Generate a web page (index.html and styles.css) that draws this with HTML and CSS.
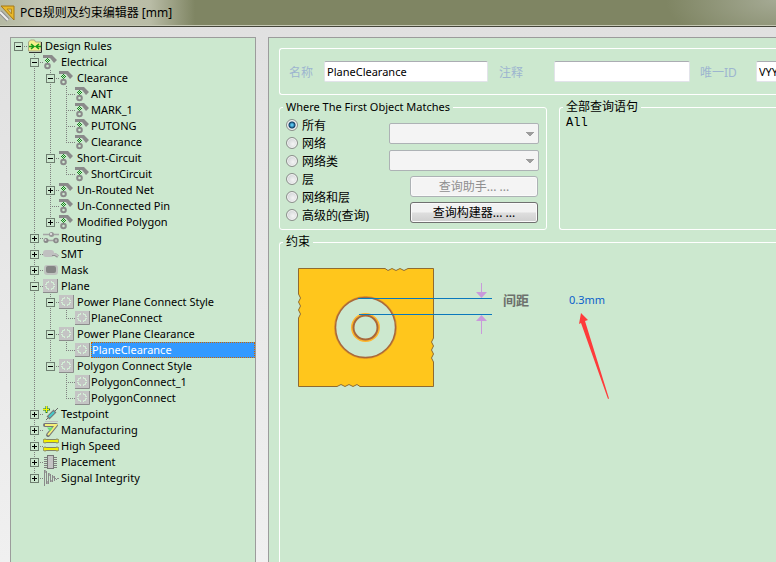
FILE: index.html
```html
<!DOCTYPE html>
<html lang="zh-CN">

<head>
  <meta charset="UTF-8">
  <meta name="viewport" content="width=device-width, initial-scale=1.0">
  <title>PCB规则及约束编辑器 [mm]</title>
  <link rel="stylesheet" href="styles.css">
</head>

<body>
  <!-- Tree icons -->
  <svg class="sprite" aria-hidden="true">
    <symbol id="i-root" viewBox="0 0 16 16">
      <path d="M1.500 13V4l2-2h4l1 2h5.500v9z" fill="#f4f08a" stroke="#a9a983" />
      <path d="M2 14.500h12.500V4" fill="none" stroke="#333" />
      <path d="M2 8.500h5M14 8.500H9M4 6l3 2.500L4 11M12 6L9 8.500l3 2.500" fill="none" stroke="#159a15" stroke-width="1.500" />
    </symbol>
    <symbol id="i-electrical" viewBox="0 0 16 16">
      <path d="M0 4V1h9l5 5-3 3L7 4z" fill="#8a8a8a" />
      <path d="M4 4h1v1H4zM3 5h1v1H3zM5 5h1v1H5zM2 6h1v1H2zM4 6h1v1H4zM6 6h1v1H6zM3 7h1v1H3zM5 7h1v1H5zM4 8h1v1H4z" fill="#15891a" />
      <circle cx="4.500" cy="12" r="2.300" fill="#cce8cf" stroke="#8a8a8a" stroke-width="2" />
    </symbol>
    <symbol id="i-routing" viewBox="0 0 16 16">
      <path d="M0 4.500h16M2 10.500h12" stroke="#a5a5a5" stroke-width="1.500" />
      <circle cx="8.500" cy="4.500" r="2.500" fill="#999" />
      <circle cx="3" cy="10.500" r="2.500" fill="#888" />
      <circle cx="13" cy="10.500" r="2" fill="#bbb" stroke="#888" stroke-width="1.500" />
      <circle cx="8" cy="4" r="1" fill="#eee" />
      <circle cx="2.500" cy="10" r="1" fill="#ddd" />
    </symbol>
    <symbol id="i-smt" viewBox="0 0 16 16">
      <rect y="4" width="11" height="7" rx="3" fill="#c0c0c0" />
      <path d="M9 8.500h3l3 2" fill="none" stroke="#909090" stroke-width="3" />
      <path d="M9 8h3l3 2" fill="none" stroke="#c0c0c0" stroke-width="2" />
    </symbol>
    <symbol id="i-mask" viewBox="0 0 16 16">
      <rect x="1" y="3" width="14" height="10" rx="3" fill="#bfc3bf" />
      <rect x="3" y="4" width="10" height="7" rx="2" fill="#858585" />
    </symbol>
    <symbol id="i-plane" viewBox="0 0 16 16">
      <path d="M0 1h14v13H0z" fill="#c4c4c4" />
      <path d="M0 14.500h14.500V1" fill="none" stroke="#8c8c8c" />
      <path d="M5.500 3v1.500H3.500v2H2M8.500 3v1.500h2v2H12M5.500 12v-1.500H3.500v-2H2M8.500 12v-1.500h2v-2H12" fill="none" stroke="#d5f2d8" />
    </symbol>
    <symbol id="i-testpoint" viewBox="0 0 16 16">
      <path d="M2 15.500h13" stroke="#c0c0c0" />
      <path d="M3 14l3-3M12 5l3-3" stroke="#666" />
      <path d="M5 12l7-7" stroke="#777" stroke-width="4" />
      <path d="M6 11l5-5" stroke="#4cc" stroke-width="2" />
      <path d="M3.500 0v7M0 3.500h7" stroke="#267d16" stroke-width="2" />
      <path d="M3.500 0v6M0 3.500h6" stroke="#f5f500" />
    </symbol>
    <symbol id="i-manufacturing" viewBox="0 0 16 16">
      <path d="M2 3h11L5 13" fill="none" stroke="#777" stroke-width="4" stroke-linejoin="round" stroke-linecap="round" />
      <path d="M2 3h11L5 13" fill="none" stroke="#f4f07a" stroke-width="2" />
      <path d="M4 5.500h6l-3 4z" fill="#69df77" />
    </symbol>
    <symbol id="i-speed" viewBox="0 0 16 16">
      <path d="M2 3h12M2 11h12" stroke="#84846a" stroke-width="4" />
      <g fill="#f2f000" stroke="#84846a">
        <circle cx="2" cy="3" r="2" />
        <circle cx="14" cy="3" r="2" />
        <circle cx="2" cy="11" r="2" />
        <circle cx="14" cy="11" r="2" />
      </g>
      <path d="M2 3h12M2 11h12" stroke="#f2f000" stroke-width="2" />
    </symbol>
    <symbol id="i-placement" viewBox="0 0 16 16">
      <path d="M1 3.500h13M1 5.500h13M1 7.500h13M1 9.500h13M1 11.500h13M1 13.500h13" stroke="#808080" />
      <rect x="4.500" y="1.500" width="6" height="13" fill="#c4c4c4" stroke="#777" />
    </symbol>
    <symbol id="i-signal" viewBox="0 0 16 16">
      <path d="M1.500 0v16M3.500 1v13M5.500 3v11M7.500 4v8M9.500 5v7M11.500 6v5M12 8.500h1M13 9.500h1M14 8.500h2" stroke="#8a8a8a" />
      <path d="M2.500 0v3M4.500 11v3M6.500 3v3M8.500 10v2M10.500 6v2" stroke="#a5aaa5" />
    </symbol>
  </svg>

  <header class="titlebar">
    <svg class="app-icon" viewBox="0 0 16 16" aria-hidden="true">
      <path d="M1 1h13v14z" fill="#e9b92b" stroke="#a57916" />
      <path d="M7 4h4.500v5z" fill="#c9c49c" stroke="#b78a1d" />
      <path d="M0 7l8 8" stroke="#8d8d8d" stroke-width="4" />
      <path d="M0 7l8 8" stroke="#eee" stroke-width="2" />
    </svg>
    <h1 class="title">PCB规则及约束编辑器 [mm]</h1>
  </header>

  <main class="window">
    <nav class="tree-panel" aria-label="Design Rules">
      <ul class="tree">
        <li>
          <div class="row"><button class="toggle" aria-label="Collapse"></button><svg class="icon"><use href="#i-root" /></svg><a class="label" href="#">Design Rules</a></div>
          <ul>
            <li>
              <div class="row"><button class="toggle" aria-label="Collapse"></button><svg class="icon"><use href="#i-electrical" /></svg><a class="label" href="#">Electrical</a></div>
              <ul>
                <li>
                  <div class="row"><button class="toggle" aria-label="Collapse"></button><svg class="icon"><use href="#i-electrical" /></svg><a class="label" href="#">Clearance</a></div>
                  <ul>
                    <li><div class="row leaf"><svg class="icon"><use href="#i-electrical" /></svg><a class="label" href="#">ANT</a></div></li>
                    <li><div class="row leaf"><svg class="icon"><use href="#i-electrical" /></svg><a class="label" href="#">MARK_1</a></div></li>
                    <li><div class="row leaf"><svg class="icon"><use href="#i-electrical" /></svg><a class="label" href="#">PUTONG</a></div></li>
                    <li><div class="row leaf"><svg class="icon"><use href="#i-electrical" /></svg><a class="label" href="#">Clearance</a></div></li>
                  </ul>
                </li>
                <li>
                  <div class="row"><button class="toggle" aria-label="Collapse"></button><svg class="icon"><use href="#i-electrical" /></svg><a class="label" href="#">Short-Circuit</a></div>
                  <ul>
                    <li><div class="row leaf"><svg class="icon"><use href="#i-electrical" /></svg><a class="label" href="#">ShortCircuit</a></div></li>
                  </ul>
                </li>
                <li><div class="row"><button class="toggle closed" aria-label="Expand"></button><svg class="icon"><use href="#i-electrical" /></svg><a class="label" href="#">Un-Routed Net</a></div></li>
                <li><div class="row branch"><svg class="icon"><use href="#i-electrical" /></svg><a class="label" href="#">Un-Connected Pin</a></div></li>
                <li><div class="row"><button class="toggle closed" aria-label="Expand"></button><svg class="icon"><use href="#i-electrical" /></svg><a class="label" href="#">Modified Polygon</a></div></li>
              </ul>
            </li>
            <li><div class="row"><button class="toggle closed" aria-label="Expand"></button><svg class="icon"><use href="#i-routing" /></svg><a class="label" href="#">Routing</a></div></li>
            <li><div class="row"><button class="toggle closed" aria-label="Expand"></button><svg class="icon"><use href="#i-smt" /></svg><a class="label" href="#">SMT</a></div></li>
            <li><div class="row"><button class="toggle closed" aria-label="Expand"></button><svg class="icon"><use href="#i-mask" /></svg><a class="label" href="#">Mask</a></div></li>
            <li>
              <div class="row"><button class="toggle" aria-label="Collapse"></button><svg class="icon"><use href="#i-plane" /></svg><a class="label" href="#">Plane</a></div>
              <ul>
                <li>
                  <div class="row"><button class="toggle" aria-label="Collapse"></button><svg class="icon"><use href="#i-plane" /></svg><a class="label" href="#">Power Plane Connect Style</a></div>
                  <ul>
                    <li><div class="row leaf"><svg class="icon"><use href="#i-plane" /></svg><a class="label" href="#">PlaneConnect</a></div></li>
                  </ul>
                </li>
                <li>
                  <div class="row"><button class="toggle" aria-label="Collapse"></button><svg class="icon"><use href="#i-plane" /></svg><a class="label" href="#">Power Plane Clearance</a></div>
                  <ul>
                    <li><div class="row leaf"><svg class="icon"><use href="#i-plane" /></svg><a class="label selected" href="#" aria-current="true">PlaneClearance</a></div></li>
                  </ul>
                </li>
                <li>
                  <div class="row"><button class="toggle" aria-label="Collapse"></button><svg class="icon"><use href="#i-plane" /></svg><a class="label" href="#">Polygon Connect Style</a></div>
                  <ul>
                    <li><div class="row leaf"><svg class="icon"><use href="#i-plane" /></svg><a class="label" href="#">PolygonConnect_1</a></div></li>
                    <li><div class="row leaf"><svg class="icon"><use href="#i-plane" /></svg><a class="label" href="#">PolygonConnect</a></div></li>
                  </ul>
                </li>
              </ul>
            </li>
            <li><div class="row"><button class="toggle closed" aria-label="Expand"></button><svg class="icon"><use href="#i-testpoint" /></svg><a class="label" href="#">Testpoint</a></div></li>
            <li><div class="row"><button class="toggle closed" aria-label="Expand"></button><svg class="icon"><use href="#i-manufacturing" /></svg><a class="label" href="#">Manufacturing</a></div></li>
            <li><div class="row"><button class="toggle closed" aria-label="Expand"></button><svg class="icon"><use href="#i-speed" /></svg><a class="label" href="#">High Speed</a></div></li>
            <li><div class="row"><button class="toggle closed" aria-label="Expand"></button><svg class="icon"><use href="#i-placement" /></svg><a class="label" href="#">Placement</a></div></li>
            <li><div class="row"><button class="toggle closed" aria-label="Expand"></button><svg class="icon"><use href="#i-signal" /></svg><a class="label" href="#">Signal Integrity</a></div></li>
          </ul>
        </li>
      </ul>
    </nav>

    <form class="editor">
      <div class="identity">
        <label for="name">名称</label>
        <input type="text" id="name" class="name-input" value="PlaneClearance">
        <label for="comment">注释</label>
        <input type="text" id="comment" class="comment-input">
        <label for="uid">唯一ID</label>
        <input type="text" id="uid" class="uid-input" value="VYYKRMQS">
      </div>

      <div class="queries">
        <fieldset class="group match">
          <legend>Where The First Object Matches</legend>
          <div class="scopes">
            <label><input type="radio" name="scope" checked>所有</label>
            <label><input type="radio" name="scope">网络</label>
            <label><input type="radio" name="scope">网络类</label>
            <label><input type="radio" name="scope">层</label>
            <label><input type="radio" name="scope">网络和层</label>
            <label><input type="radio" name="scope">高级的(查询)</label>
          </div>
          <div class="pickers">
            <select aria-label="网络" disabled></select>
            <select aria-label="层" disabled></select>
            <button type="button" class="btn" disabled>查询助手... ...</button>
            <button type="button" class="btn">查询构建器... ...</button>
          </div>
        </fieldset>

        <fieldset class="group full-query">
          <legend class="zh">全部查询语句</legend>
          <code class="query">All</code>
        </fieldset>
      </div>

      <fieldset class="group constraint">
        <legend class="zh">约束</legend>
        <div class="diagram">
          <svg class="drawing" viewBox="0 0 360 150" role="img" aria-label="间距 0.3mm">
            <path d="M10.500 10.500H97l3 2 4-2 4 2 4-2 4 2 4-2H145.500V80l-2 4 2 4-2 4 2 4-2 4 2 4V128.500H72l-3-2-4 2-4-2-4 2-4-2-4 2H10.500V60l2-4-2-4 2-4-2-4 2-4-2-4z" fill="#ffc61c" stroke="#8f6b31" />
            <circle cx="77.500" cy="69.500" r="31" fill="none" stroke="#e39a25" />
            <circle cx="77.500" cy="69.500" r="30" fill="#cce8cf" stroke="#a8683a" stroke-width="1.500" />
            <circle cx="77.500" cy="69.500" r="13.500" fill="none" stroke="#ffb62b" stroke-width="2" />
            <circle cx="77.500" cy="69.500" r="12" fill="none" stroke="#a8683a" stroke-width="2" />
            <path d="M70 40.500h134M71 56.500h133" stroke="#0a78bd" />
            <path d="M193.500 25v10M193.500 62v14" stroke="#c99adb" />
            <path d="M188 34h11l-5.500 6zM188 63h11l-5.500-6z" fill="#c99adb" />
            <path d="M293 55l7 7-3 1 24 77.500-1 .500L293 65l-2 1z" fill="#fe3b3b" />
          </svg>
          <label class="gap-label" for="gap">间距</label>
          <input type="text" id="gap" class="gap-value" value="0.3mm">
        </div>
      </fieldset>
    </form>
  </main>
</body>

</html>
```
FILE: styles.css
```css
* {
  box-sizing: border-box;
}

body {
  display: flex;
  flex-direction: column;
  height: 100vh;
  margin: 0;
  overflow: hidden;
  background: linear-gradient(to bottom, #e0e0e0, #f0f0f0);
  color: #000;
  font-family: "Noto Sans", "Noto Sans CJK SC", sans-serif;
  font-size: 11px;
}

input,
select,
button {
  font: inherit;
}

ul {
  margin: 0;
  padding: 0;
  list-style: none;
}

.sprite {
  display: none;
}

/* Title bar */
.titlebar {
  display: flex;
  flex: none;
  align-items: center;
  gap: 4px;
  height: 27px;
  border-bottom: 1px solid #45463a;
  box-shadow: inset 0 -1px #c5c8b4;
  background:
    linear-gradient(to right, #b5b9a3, #c3c6b2 40px, #b9bca6 150px, transparent 195px),
    radial-gradient(ellipse 110px 50px at 100% 0, #a5aa94, transparent),
    #7f8563;
}

.app-icon {
  width: 16px;
  height: 18px;
}

.title {
  margin: 0;
  font-size: 12px;
  font-weight: normal;
  line-height: 24px;
}

.window {
  display: flex;
  flex: 1;
  gap: 12px;
  min-height: 0;
  padding: 10px 0 0 10px;
}

/* Rule tree */
.tree-panel {
  flex: none;
  width: 246px;
  border: 1px solid #9c9c9c;
  border-bottom: 0;
  background: #cce8cf;
}

.tree {
  padding-left: 3px;
}

.tree ul {
  padding-left: 16px;
}

.tree li li {
  background: repeating-linear-gradient(#808080 0 1px, transparent 1px 2px) 4px 0 / 1px 100% no-repeat;
}

.tree li li:last-child {
  background-size: 1px 8px;
}

.row {
  display: flex;
  align-items: center;
  height: 16px;
  background: repeating-linear-gradient(to right, #808080 0 1px, transparent 1px 2px) 4px 8px / 10px 1px no-repeat;
}

.row.leaf,
.row.branch {
  padding-left: 13px;
}

.toggle {
  flex: none;
  width: 9px;
  height: 9px;
  margin-right: 4px;
  padding: 0;
  border: 1px solid #6f7f71;
  background:
    linear-gradient(#000, #000) center / 5px 1px no-repeat,
    #cce8cf;
}

.toggle.closed {
  background:
    linear-gradient(#000, #000) center / 5px 1px no-repeat,
    linear-gradient(#000, #000) center / 1px 5px no-repeat,
    #cce8cf;
}

.icon {
  flex: none;
  width: 16px;
  height: 16px;
}

.label {
  flex: 1;
  padding-left: 2px;
  color: #000;
  line-height: 16px;
  text-decoration: none;
  white-space: nowrap;
}

.leaf .label {
  padding-left: 0;
}

.label.selected {
  border: 1px dotted #cc6600;
  background: #3399ff;
  color: #fff;
  line-height: 14px;
}

/* Rule editor */
.editor {
  display: flex;
  flex: 1;
  flex-direction: column;
  min-width: 0;
  padding: 10px 0 0 10px;
  overflow: hidden;
  border: 1px solid #9c9c9c;
  border-width: 1px 0 0 1px;
  background: #cce8cf;
}

.identity {
  display: flex;
  flex: none;
  align-items: center;
  height: 47px;
  padding-left: 9px;
  border: 1px solid #fff;
  border-right: 0;
  border-radius: 3px 0 0 3px;
}

.identity label {
  flex: none;
  color: #9db5cf;
  font-size: 12px;
}

.identity input {
  flex: none;
  height: 21px;
  padding: 0 2px;
  border: 1px solid #e2e3ea;
  border-top-color: #abadb3;
  border-radius: 2px;
  background: #fff;
}

.identity .name-input {
  width: 164px;
  margin: 0 11px;
}

.identity .comment-input {
  width: 136px;
  margin: 0 10px 0 31px;
}

.identity .uid-input {
  width: 100px;
  margin-left: 19px;
}

.queries {
  display: flex;
  flex: none;
  gap: 12px;
  margin-top: 4px;
}

.group {
  min-width: 0;
  margin: 0;
  padding: 0 7px 0 6px;
  border: 1px solid #fff;
  border-radius: 3px;
}

.group legend {
  margin-left: -3px;
  padding: 0 3px;
  line-height: 16px;
}

.group legend.zh {
  font-size: 12px;
}

.match {
  display: flex;
  justify-content: space-between;
  width: 268px;
  height: 131px;
}

.scopes {
  display: flex;
  flex-direction: column;
  padding-top: 1px;
}

.scopes label {
  display: flex;
  align-items: center;
  gap: 4px;
  height: 18px;
  font-size: 12px;
}

.scopes input {
  appearance: none;
  width: 12px;
  height: 12px;
  margin: 0;
  border: 1px solid #8b8f8b;
  border-radius: 50%;
  box-shadow: inset 0 0 0 1px #f4f4f4;
  background: radial-gradient(circle at 60% 60%, #f4f4f4, #c4c8cb);
}

.scopes input:checked {
  background: radial-gradient(circle, #58c4ee 0 1px, #0f3f66 3px, #d8dde0 4px);
}

.pickers {
  display: flex;
  flex-direction: column;
  align-items: flex-end;
  gap: 5px;
  padding-top: 8px;
}

.pickers select {
  appearance: none;
  width: 150px;
  height: 21px;
  border: 1px solid #adb2b5;
  border-radius: 2px;
  background:
    conic-gradient(from -45deg at 50% 100%, #9d9d9d 90deg, transparent 0) right 4px center / 8px 4px no-repeat,
    #f4f4f4;
  opacity: 1;
}

.pickers select + select {
  margin-top: 1px;
}

.btn {
  width: 128px;
  height: 21px;
  margin-right: 1px;
  padding: 0;
  border: 1px solid #707070;
  border-radius: 3px;
  box-shadow: inset 0 0 0 1px #fafafa;
  background: linear-gradient(#f2f2f2 45%, #dddddd 55%, #cfcfcf);
  color: #000;
  font-size: 12px;
  line-height: 18px;
}

.btn:disabled {
  border-color: #adb2b5;
  background: #f4f4f4;
  color: #8f8f8f;
}

.full-query {
  flex: 1;
  border-right: 0;
  border-radius: 3px 0 0 3px;
}

.query {
  display: block;
  font-family: "Liberation Mono", monospace;
  font-size: 12px;
  line-height: 16px;
}

.constraint {
  flex: 1;
  margin-top: 4px;
  border-width: 1px 0 0 1px;
  border-radius: 3px 0 0;
}

/* Clearance drawing */
.diagram {
  display: grid;
  grid-template-columns: 215px 66px 1fr;
  align-items: start;
  padding: 8px 0 0 2px;
}

.drawing {
  grid-row: 1;
  grid-column: 1 / -1;
  width: 360px;
  height: 150px;
}

.gap-label,
.gap-value {
  grid-row: 1;
  margin-top: 32px;
  line-height: 20px;
}

.gap-label {
  grid-column: 2;
  color: #6c706c;
  font-size: 13px;
  font-weight: bold;
}

.gap-value {
  grid-column: 3;
  width: 60px;
  height: 20px;
  padding: 0;
  border: 0;
  background: none;
  color: #0a5fcb;
}
```
